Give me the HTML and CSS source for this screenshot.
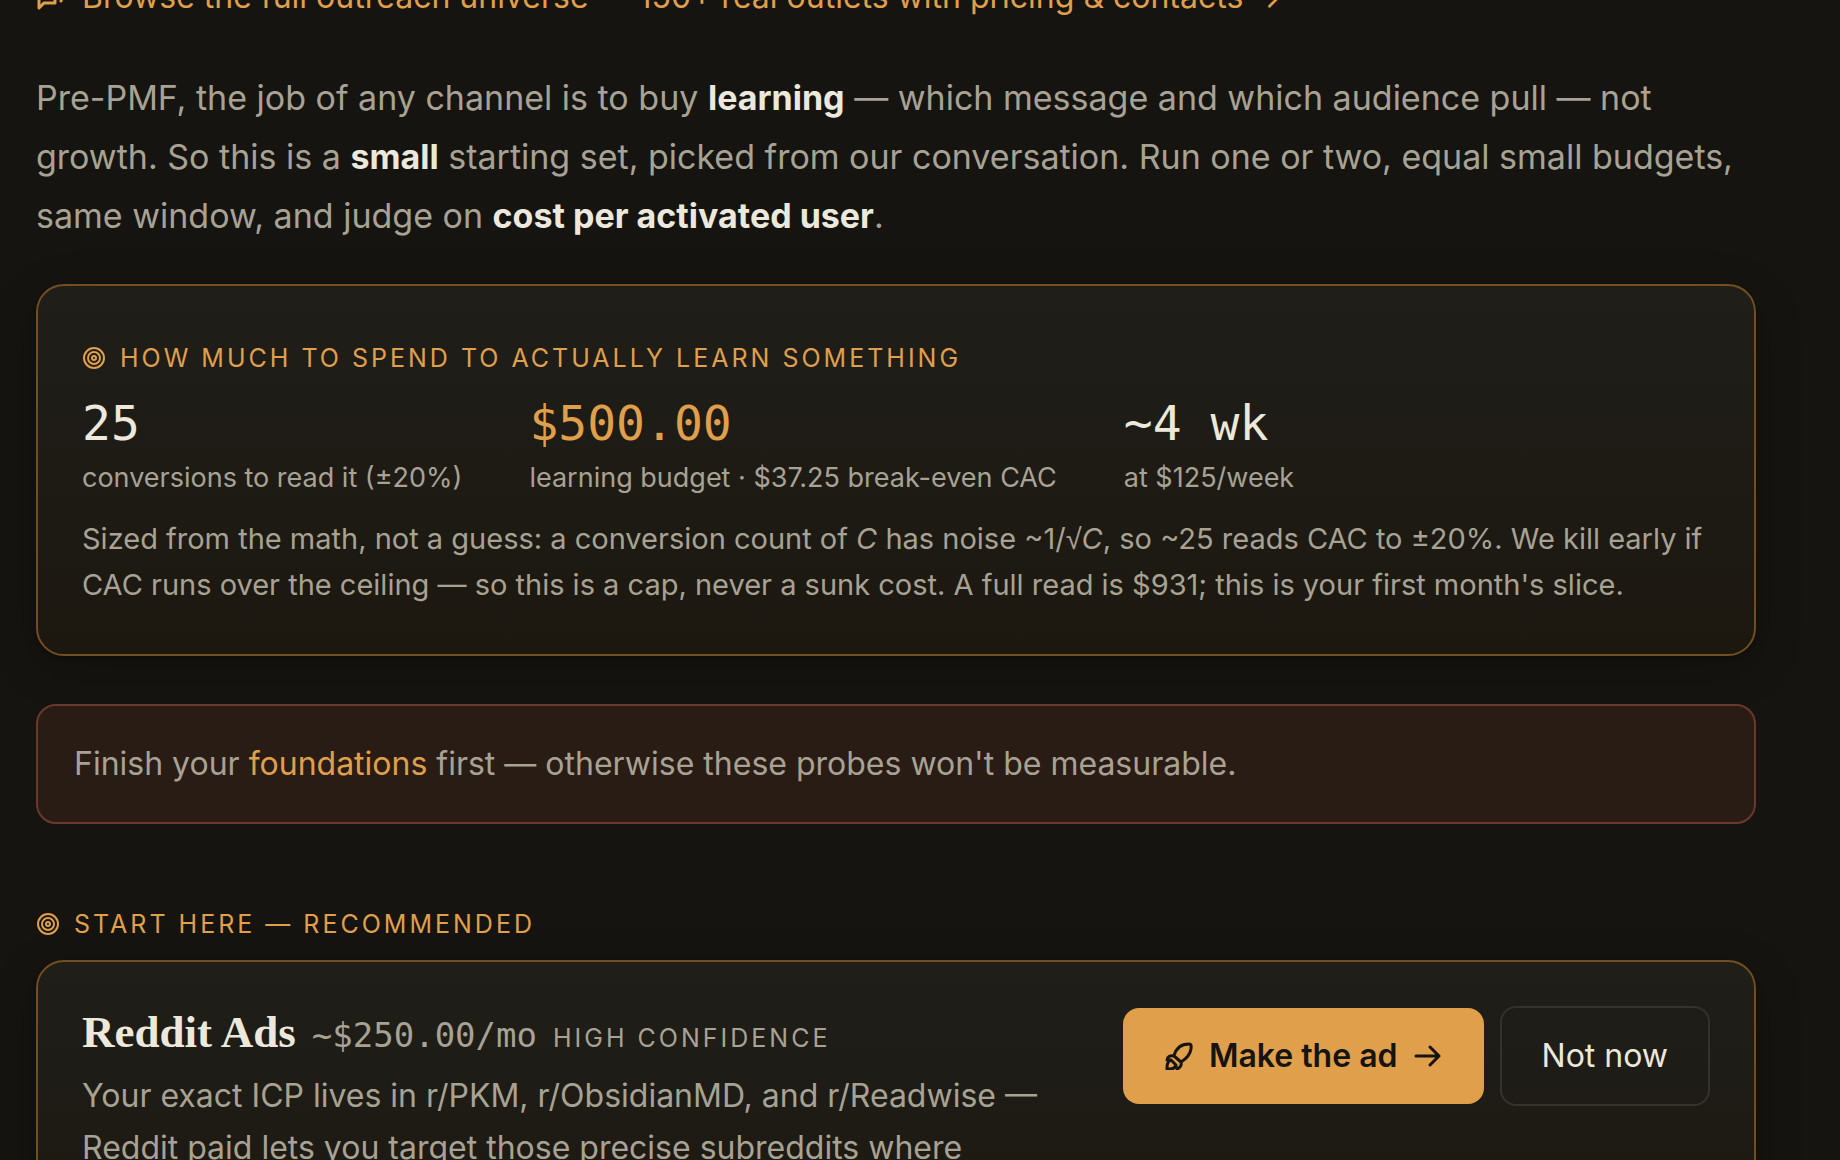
FILE: index.html
```html
<!DOCTYPE html>
<html lang="en">
  <head>
    <meta charset="utf-8">
    <title>Channels</title>
    <link rel="stylesheet" href="styles.css">
  </head>
  <body>
    <svg class="defs" aria-hidden="true">
      <symbol id="target" viewBox="0 0 24 24">
        <circle cx="12" cy="12" r="10"/>
        <circle cx="12" cy="12" r="6"/>
        <circle cx="12" cy="12" r="2"/>
      </symbol>
    </svg>
    <main>
      <a class="browse" href="#universe">
        <svg class="icon" viewBox="0 0 30 30"><path d="M3 27V5h16v17H8zM25 8l2 6-2 6"/></svg>
        Browse the full outreach universe — 150+ real outlets with pricing &amp; contacts →
      </a>

      <p class="intro">
        Pre-PMF, the job of any channel is to buy <strong>learning</strong> — which message and which audience pull — not
        growth. So this is a <strong>small</strong> starting set, picked from our conversation. Run one or two, equal small budgets,
        same window, and judge on <strong>cost per activated user</strong>.
      </p>

      <section class="panel budget">
        <h2 class="eyebrow"><svg class="icon"><use href="#target"/></svg>How much to spend to actually learn something</h2>
        <div class="stats">
          <div>
            <div class="num">25</div>
            <div class="label">conversions to read it (±20%)</div>
          </div>
          <div>
            <div class="num accent">$500.00</div>
            <div class="label">learning budget · $37.25 break-even CAC</div>
          </div>
          <div>
            <div class="num">~4 wk</div>
            <div class="label">at $125/week</div>
          </div>
        </div>
        <p class="note">
          Sized from the math, not a guess: a conversion count of <em>C</em> has noise ~1/<em><span class="root">√</span>C</em>, so ~25 reads CAC to ±20%. We kill early if
          CAC runs over the ceiling — so this is a cap, never a sunk cost. A full read is $931; this is your first month's slice.
        </p>
      </section>

      <p class="warning">Finish your <a href="#foundations">foundations</a> first — otherwise these probes won't be measurable.</p>

      <h2 class="eyebrow start"><svg class="icon"><use href="#target"/></svg>Start here — recommended</h2>

      <section class="panel channel">
        <div class="info">
          <div class="title">
            <h3>Reddit Ads</h3>
            <span class="price">~$250.00/mo</span>
            <span class="confidence">High confidence</span>
          </div>
          <p>
            Your exact ICP lives in r/PKM, r/ObsidianMD, and r/Readwise —
            Reddit paid lets you target those precise subreddits where
          </p>
        </div>
        <div class="actions">
          <button type="button" class="primary">
            <svg class="icon" viewBox="0 0 28 28"><path d="M9 14C11 6 16 2 24 2c3 0 2 3 2 5-1 6-5 10-10 13zM9 14C5 13 2 15 2 18l4 0M16 20c1 3-1 6-4 7l-2-5M6 18c-4 2-4 5-4 9 4 0 8 0 9-4z"/></svg>
            <span>Make the ad</span>
            <svg class="arrow" viewBox="0 0 28 28"><path d="M2 14h23M16 5l9 9-9 9"/></svg>
          </button>
          <button type="button" class="ghost">Not now</button>
        </div>
      </section>
    </main>
  </body>
</html>
```

FILE: styles.css
```css
* { box-sizing: border-box; }
html { overflow: hidden; }
body {
  margin: 0;
  background-color: #151410;
  color: #a8a294;
  font-family: Inter, "Liberation Sans", sans-serif;
}
main {
  margin: -28px 84px 0 36px;
}
a { color: #e09f4b; text-decoration: none; }
h2, h3, p { margin: 0; }
strong { color: #ece8dc; font-weight: 700; }
.defs { display: none; }
.icon, .arrow {
  width: 24px;
  height: 24px;
  flex: none;
  fill: none;
  stroke: currentColor;
  stroke-width: 2;
  stroke-linecap: round;
  stroke-linejoin: round;
}

.browse {
  display: flex;
  align-items: center;
  gap: 16px;
  height: 48px;
  font-size: 32px;
}
.browse .icon { width: 30px; height: 30px; stroke-width: 3; }

.intro {
  margin-top: 48px;
  font-size: 34px;
  line-height: 59px;
}

.panel {
  border: 2px solid #734e20;
  border-radius: 28px;
  background: linear-gradient(#1f1e19, #1c1810);
  box-shadow: 0 2px 4px rgba(0, 0, 0, .3), 0 12px 48px rgba(0, 0, 0, .2);
  padding: 44px;
}
.budget {
  margin-top: 39px;
  padding: 52px 44px 46px;
}

.eyebrow {
  display: flex;
  align-items: center;
  gap: 14px;
  color: #e09f4b;
  font-size: 25px;
  font-weight: 400;
  line-height: 40px;
  letter-spacing: 3px;
  text-transform: uppercase;
}

.stats {
  display: flex;
  gap: 67px;
  margin-top: 14px;
}
.num {
  color: #ece8dc;
  font-family: "DejaVu Sans Mono", monospace;
  font-size: 48px;
  line-height: 62px;
}
.accent { color: #e09f4b; }
.label {
  font-size: 27px;
  line-height: 48px;
}
.note {
  margin-top: 14px;
  font-size: 29px;
  line-height: 46px;
}
.root { font-family: "Liberation Sans", sans-serif; line-height: 1; }

.warning {
  margin-top: 48px;
  padding: 30px 36px;
  border: 2px solid #6b382c;
  border-radius: 20px;
  background-color: #291c15;
  font-size: 32px;
  line-height: 56px;
}

.start { margin: 80px 0 16px; }

.channel {
  display: grid;
  grid-template-columns: 1fr auto;
  gap: 64px;
  align-items: start;
  padding-bottom: 120px;
}
.title {
  display: flex;
  align-items: baseline;
  gap: 16px;
}
h3 {
  color: #ece8dc;
  font-family: "Liberation Serif", serif;
  font-size: 45px;
  line-height: 52px;
}
.price {
  font-family: "DejaVu Sans Mono", monospace;
  font-size: 34px;
}
.confidence {
  font-size: 25px;
  letter-spacing: 3px;
  text-transform: uppercase;
}
.info p {
  margin-top: 12px;
  font-size: 32px;
  line-height: 52px;
}

.actions {
  display: flex;
  align-items: center;
  gap: 16px;
}
button {
  border-radius: 16px;
  font-family: inherit;
  font-size: 32px;
  line-height: 48px;
}
.primary {
  display: flex;
  align-items: center;
  gap: 16px;
  padding: 24px 42px;
  border: 0;
  background-color: #e09f4b;
  color: #151410;
  font-weight: 600;
}
.primary .icon, .primary .arrow { width: 28px; height: 28px; }
.primary .icon { stroke-width: 3; }
.primary .arrow { stroke-width: 3; }
.ghost {
  padding: 24px 40px;
  border: 2px solid #35312b;
  background: none;
  color: #ece8dc;
}
```
